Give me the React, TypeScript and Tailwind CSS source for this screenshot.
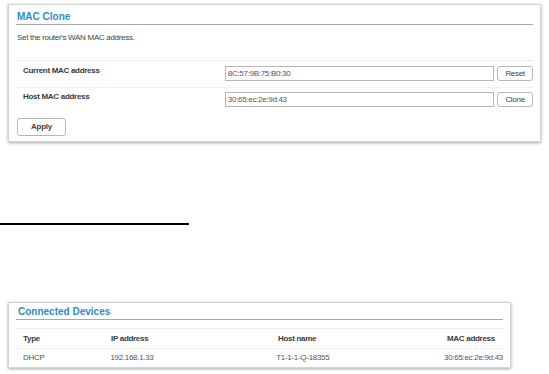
import React from "react";

const font = { fontFamily: '"Liberation Sans", Arial, sans-serif' };

function MacRow({ label, value, btn }: { label: string; value: string; btn: string }) {
  return (
    <div className="flex h-[26px] items-start">
      <div className="ml-[7px] mt-[5px] w-[203px] text-[8px] font-bold leading-[10px] tracking-[-0.3px] text-[#3a3a3a]">
        {label}
      </div>
      <div className="mt-[5px] flex h-[15px] w-[271px] items-center border border-[#b5b5b5] bg-white pl-[2px] text-[8px] tracking-[-0.3px] text-[#555]">
        {value}
      </div>
      <div className="ml-[3px] mt-[5px] flex h-[15px] w-[36px] items-center justify-center rounded-[3px] border border-[#b8b8b8] bg-white text-[8px] tracking-[-0.3px] text-[#444]">
        {btn}
      </div>
    </div>
  );
}

export default function App() {
  return (
    <div className="h-[374px] w-[549px] overflow-hidden bg-white" style={font}>
      <div className="ml-[8px] mt-[4px] h-[138px] w-[533px] border border-[#d4d4d4] bg-white px-[7px] shadow-[0_1px_3px_rgba(0,0,0,0.35)]">
        <div className="h-[20px] border-b border-[#a8a8a8] pl-[1px] pt-[6px] text-[10px] font-bold leading-[12px] text-[#2e8cca]">
          MAC Clone
        </div>
        <div className="mt-[8px] pl-[1px] text-[8px] leading-[10px] tracking-[-0.3px] text-[#444]">
          Set the router's WAN MAC address.
        </div>
        <div className="mt-[17px] border-t border-dotted border-[#dcdcdc]" />
        <MacRow label="Current MAC address" value="8C:57:9B:75:B0:30" btn="Reset" />
        <div className="border-t border-dotted border-[#e6e6e6]" />
        <div className="-mt-[1px]">
          <MacRow label="Host MAC address" value="30:65:ec:2e:9d:43" btn="Clone" />
        </div>
        <div className="ml-[1px] mt-[5px] flex h-[18px] w-[49px] items-center justify-center rounded-[3px] border border-[#b5b5b5] bg-white text-[8px] font-bold tracking-[-0.2px] text-[#444]">
          Apply
        </div>
      </div>

      <div className="mt-[81px] h-[2px] w-[189px] bg-black" />

      <div className="ml-[8px] mt-[77px] h-[66px] w-[503px] border border-[#d4d4d4] bg-white px-[7px] shadow-[0_1px_3px_rgba(0,0,0,0.35)]">
        <div className="h-[17px] border-b border-[#a8a8a8] pl-[2px] pt-[3px] text-[10px] font-bold leading-[12px] text-[#2e8cca]">
          Connected Devices
        </div>
        <div className="mt-[8px] border-t border-dotted border-[#dcdcdc]" />
        <div className="flex h-[20px] items-center border-b border-dotted border-[#dcdcdc] text-[8px] font-bold tracking-[-0.3px] text-[#3a3a3a]">
          <div className="w-[95px] pl-[7px]">Type</div>
          <div className="w-[167px]">IP address</div>
          <div className="w-[169px]">Host name</div>
          <div>MAC address</div>
        </div>
        <div className="flex h-[18px] items-center text-[8px] tracking-[-0.3px] text-[#555]">
          <div className="w-[95px] pl-[7px]">DHCP</div>
          <div className="w-[167px]">192.168.1.33</div>
          <div className="w-[169px]">T1-1-1-Q-18355</div>
          <div>30:65:ec:2e:9d:43</div>
        </div>
      </div>
    </div>
  );
}
